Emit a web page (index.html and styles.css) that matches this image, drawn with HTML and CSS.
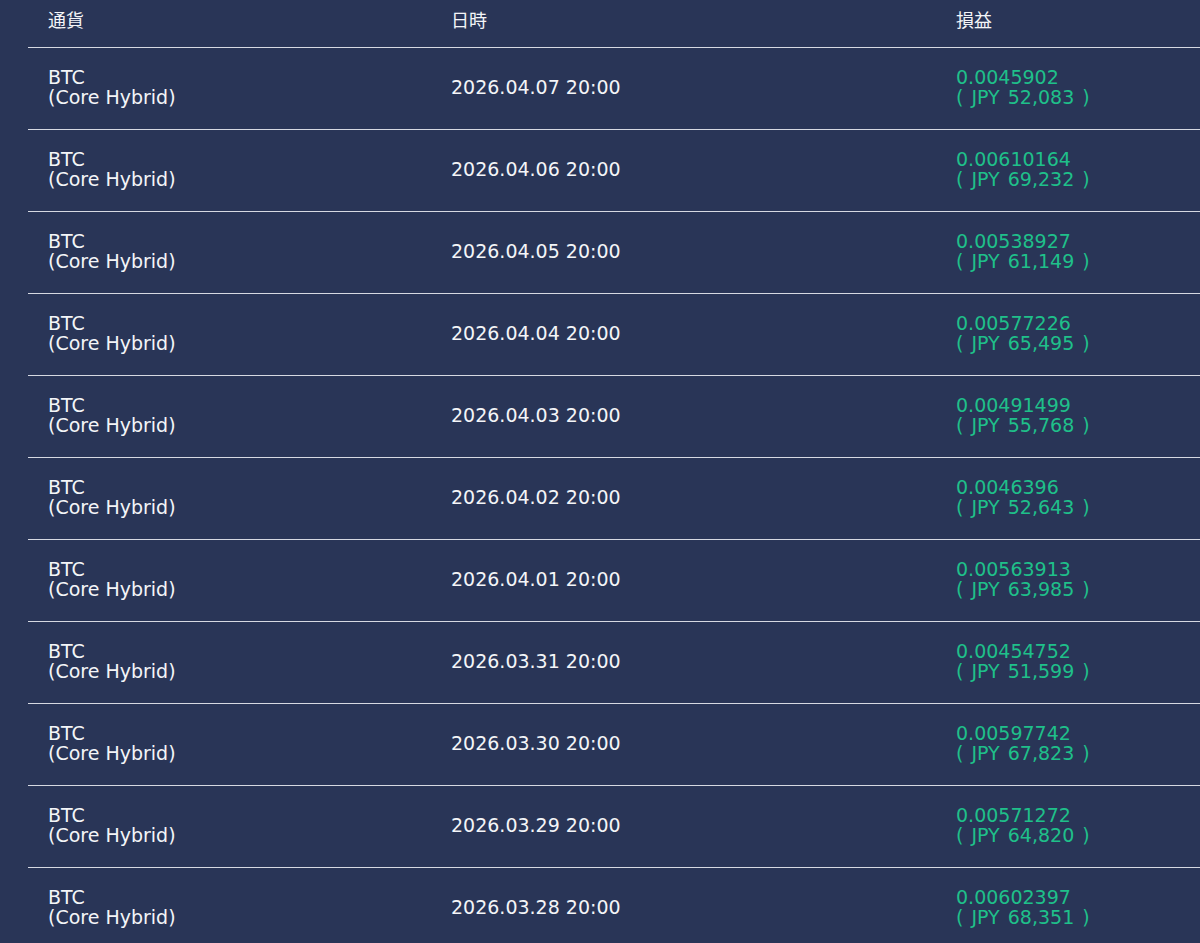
FILE: index.html
```html
<!DOCTYPE html>
<html lang="ja">
<head>
    <meta charset="UTF-8">
    <meta name="viewport" content="width=device-width, initial-scale=1.0">
    <title>損益履歴</title>
    <link rel="stylesheet" href="styles.css">
</head>
<body>

<!-- Historie der Erträge -->
<div class="history-wrap">
    <table class="history-table">
        <thead>
            <tr>
                <th class="col-coin">通貨</th>
                <th class="col-date">日時</th>
                <th class="col-profit">損益</th>
            </tr>
        </thead>
        <tbody>
            <tr><td>BTC<br>(Core Hybrid)</td><td>2026.04.07 20:00</td><td class="profit">0.0045902<br>( JPY 52,083 )</td></tr>
            <tr><td>BTC<br>(Core Hybrid)</td><td>2026.04.06 20:00</td><td class="profit">0.00610164<br>( JPY 69,232 )</td></tr>
            <tr><td>BTC<br>(Core Hybrid)</td><td>2026.04.05 20:00</td><td class="profit">0.00538927<br>( JPY 61,149 )</td></tr>
            <tr><td>BTC<br>(Core Hybrid)</td><td>2026.04.04 20:00</td><td class="profit">0.00577226<br>( JPY 65,495 )</td></tr>
            <tr><td>BTC<br>(Core Hybrid)</td><td>2026.04.03 20:00</td><td class="profit">0.00491499<br>( JPY 55,768 )</td></tr>
            <tr><td>BTC<br>(Core Hybrid)</td><td>2026.04.02 20:00</td><td class="profit">0.0046396<br>( JPY 52,643 )</td></tr>
            <tr><td>BTC<br>(Core Hybrid)</td><td>2026.04.01 20:00</td><td class="profit">0.00563913<br>( JPY 63,985 )</td></tr>
            <tr><td>BTC<br>(Core Hybrid)</td><td>2026.03.31 20:00</td><td class="profit">0.00454752<br>( JPY 51,599 )</td></tr>
            <tr><td>BTC<br>(Core Hybrid)</td><td>2026.03.30 20:00</td><td class="profit">0.00597742<br>( JPY 67,823 )</td></tr>
            <tr><td>BTC<br>(Core Hybrid)</td><td>2026.03.29 20:00</td><td class="profit">0.00571272<br>( JPY 64,820 )</td></tr>
            <tr><td>BTC<br>(Core Hybrid)</td><td>2026.03.28 20:00</td><td class="profit">0.00602397<br>( JPY 68,351 )</td></tr>
        </tbody>
    </table>
</div>

</body>
</html>
```
FILE: styles.css
```css
body {
    margin: 0;
    background-color: #293557;
    color: #f4f5f8;
    font-family: "DejaVu Sans", "Noto Sans CJK JP", sans-serif;
    font-size: 19px;
    line-height: 20px;
}

.history-wrap {
    padding-left: 28px;
}

.history-table {
    width: 100%;
    border-collapse: collapse;
    table-layout: fixed;
}

.history-table th {
    text-align: left;
    font-weight: normal;
    font-family: "Noto Sans CJK JP", sans-serif;
    font-size: 18px;
    height: 37px;
    padding: 0 20px 10px;
    vertical-align: middle;
    border-bottom: 1px solid #d6d9e2;
}

.col-coin {
    width: 363px;
}

.col-date {
    width: 465px;
}

.history-table td {
    height: 41px;
    padding: 18px 20px 22px;
    vertical-align: middle;
    border-bottom: 1px solid #d6d9e2;
}

.profit {
    color: #1fc08a;
    word-spacing: 2px;
}
```
